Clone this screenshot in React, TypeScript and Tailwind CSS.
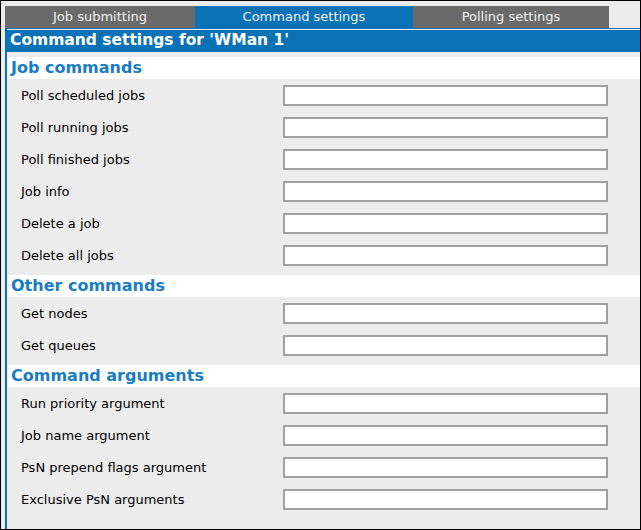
import React from 'react';

const TABS = [
  { label: 'Job submitting', width: 'w-[190px]', active: false },
  { label: 'Command settings', width: 'w-[218px]', active: true },
  { label: 'Polling settings', width: 'w-[196px]', active: false },
];

const SECTIONS: { title: string; fields: string[] }[] = [
  {
    title: 'Job commands',
    fields: [
      'Poll scheduled jobs',
      'Poll running jobs',
      'Poll finished jobs',
      'Job info',
      'Delete a job',
      'Delete all jobs',
    ],
  },
  {
    title: 'Other commands',
    fields: ['Get nodes', 'Get queues'],
  },
  {
    title: 'Command arguments',
    fields: [
      'Run priority argument',
      'Job name argument',
      'PsN prepend flags argument',
      'Exclusive PsN arguments',
    ],
  },
];

function FieldRow({ label }: { label: string }) {
  return (
    <div className="flex items-center h-[32px]">
      <span className="w-[276px] pl-[14px] text-[13px] text-black leading-none">{label}</span>
      <input
        type="text"
        className="w-[325px] h-[21px] bg-white border-2 border-[#a0a0a0] outline-none"
      />
    </div>
  );
}

export default function App() {
  return (
    <div className="w-[641px] h-[530px] border border-black bg-[#ececec] pl-1 pt-[5px] font-['DejaVu_Sans',Verdana,sans-serif] overflow-hidden">
      {/* Tabs */}
      <div className="flex h-[22px]">
        {TABS.map((tab) => (
          <div
            key={tab.label}
            className={`${tab.width} flex items-center justify-center text-[13px] text-[#f2f2f2] ${
              tab.active ? 'bg-[#0b72b5]' : 'bg-[#6a6a6a]'
            }`}
          >
            {tab.label}
          </div>
        ))}
      </div>

      {/* Panel */}
      <div className="border-t border-l-2 border-[#0b72b5] pt-px h-[502px]">
        <div className="h-[22px] bg-[#0b72b5] pl-[3px] flex items-center text-white font-bold text-[15.5px]">
          Command settings for 'WMan 1'
        </div>

        <div className="mt-[5px]">
          {SECTIONS.map((section, i) => (
            <div key={section.title} className={i > 0 ? 'mt-[4px]' : ''}>
              <div className="ml-px h-[22px] bg-white pl-[3px] flex items-center text-[#1a7cc2] font-bold text-[16px]">
                {section.title}
              </div>
              {section.fields.map((f) => (
                <FieldRow key={f} label={f} />
              ))}
            </div>
          ))}
        </div>
      </div>
    </div>
  );
}
